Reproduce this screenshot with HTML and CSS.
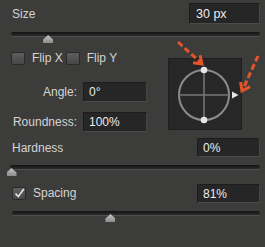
FILE: index.html
```html
<!DOCTYPE html>
<html>
<head>
<meta charset="utf-8">
<link rel="stylesheet" href="styles.css">
</head>
<body>
<div class="panel">
  <div class="row size-row">
    <span class="label">Size</span>
    <div class="field field-size">30 px</div>
  </div>
  <div class="slider slider-size"><div class="track"></div><div class="thumb" style="left:14.9%"></div></div>

  <div class="mid">
    <div class="mid-left">
      <div class="flips">
        <label class="cb"><span class="box"></span><span class="cb-text">Flip X</span></label>
        <label class="cb"><span class="box"></span><span class="cb-text">Flip Y</span></label>
      </div>
      <div class="prop prop-angle">
        <span class="plabel">Angle:</span>
        <div class="field field-prop">0°</div>
      </div>
      <div class="prop prop-round">
        <span class="plabel">Roundness:</span>
        <div class="field field-prop">100%</div>
      </div>
    </div>
    <div class="dial">
      <svg width="74" height="72" viewBox="0 0 74 72">
        <circle cx="36" cy="37" r="25" fill="none" stroke="#8c8c8c" stroke-width="2"/>
        <line x1="11" y1="37" x2="61" y2="37" stroke="#777" stroke-width="1.5"/>
        <line x1="36" y1="12" x2="36" y2="62" stroke="#777" stroke-width="1.5"/>
        <circle cx="36" cy="12" r="3.3" fill="#e6e6e6"/>
        <circle cx="36" cy="62" r="3.3" fill="#e6e6e6"/>
        <polygon points="64,33.5 70.5,37 64,40.5" fill="#e6e6e6"/>
      </svg>
    </div>
  </div>

  <div class="row hard-row">
    <span class="label">Hardness</span>
    <div class="field field-small">0%</div>
  </div>
  <div class="slider slider-hard"><div class="track"></div><div class="thumb" style="left:0.6%"></div></div>

  <div class="row spacing-row">
    <label class="cb"><span class="box checked"><svg width="11" height="11" viewBox="0 0 11 11"><polyline points="1.5,5.5 4.3,8.6 9.8,1" fill="none" stroke="#e8e8e8" stroke-width="1.6"/></svg></span><span class="cb-text">Spacing</span></label>
    <div class="field field-small">81%</div>
  </div>
  <div class="slider slider-spacing"><div class="track"></div><div class="thumb" style="left:39.7%"></div></div>

  <svg class="arrows" width="265" height="247" viewBox="0 0 265 247">
    <g fill="none" stroke="#e5552b" stroke-width="3">
      <line x1="178" y1="42" x2="200" y2="62" stroke-dasharray="6 3"/>
      <polyline points="193,62.8 202,64 200.1,55.2" stroke-linejoin="miter"/>
      <line x1="258" y1="56" x2="243.5" y2="88" stroke-dasharray="6 3"/>
      <polyline points="240.6,82 242,91 250,86.6" stroke-linejoin="miter"/>
    </g>
  </svg>
</div>
</body>
</html>
```

FILE: styles.css
```css
html, body {
  margin: 0;
  padding: 0;
  background: #3c3c3b;
}
.panel {
  position: relative;
  width: 265px;
  height: 247px;
  box-sizing: border-box;
  padding: 3px 5px 0 11px;
  background: #3c3c3b;
  font-family: "Liberation Sans", Arial, sans-serif;
  font-size: 12px;
  color: #d4d4d4;
  overflow: hidden;
}
.row {
  display: flex;
  align-items: center;
  justify-content: space-between;
}
.label {
  padding-left: 1px;
}
.size-row { height: 21px; }
.field {
  box-sizing: border-box;
  background: #262626;
  border: 1px solid #1d1d1d;
  border-bottom-color: #4a4a4a;
  border-right-color: #444;
  color: #ececec;
  display: flex;
  align-items: center;
  padding-left: 5px;
}
.field-size { width: 71px; height: 21px; padding-left: 6px; font-size: 12.5px; }
.field-small { width: 63px; height: 19px; }
.field-prop { width: 64px; height: 20px; }

.slider {
  position: relative;
  height: 4px;
}
.track {
  height: 4px;
  border-radius: 2px;
  background: linear-gradient(#121212, #2c2c2c);
  box-shadow: 0 1px 0 rgba(255,255,255,0.1);
}
.thumb {
  position: absolute;
  top: 3px;
  width: 10px;
  height: 8px;
  transform: translateX(-50%);
  background: linear-gradient(#c4c4c4, #8c8c8c);
  clip-path: polygon(50% 0, 100% 55%, 100% 100%, 0 100%, 0 55%);
}
.slider-size { margin-top: 8px; }
.slider-hard { margin-top: 8px; margin-left: -1px; }
.slider-spacing { margin-top: 8px; margin-left: 1px; }

.mid {
  display: flex;
  align-items: flex-start;
  margin-top: 16px;
}
.mid-left {
  width: 136px;
}
.flips {
  display: flex;
  height: 13px;
  align-items: center;
  gap: 3px;
}
.cb {
  display: flex;
  align-items: center;
  gap: 7px;
}
.box {
  box-sizing: border-box;
  width: 14px;
  height: 13px;
  border: 1px solid #2a2a2a;
  border-radius: 2px;
  background: linear-gradient(#5e5e5e, #474747);
  display: flex;
  align-items: center;
  justify-content: center;
}
.cb-text { line-height: 13px; }
.prop {
  display: flex;
  align-items: center;
  gap: 6px;
}
.plabel {
  width: 66px;
  text-align: right;
}
.prop-angle { margin-top: 17px; }
.prop-round { margin-top: 10px; }

.dial {
  margin-top: 6px;
  margin-left: 21px;
  width: 74px;
  height: 72px;
  background: #272727;
  box-shadow: inset 0 0 0 1px #1f1f1f;
}
.dial svg { display: block; }

.hard-row { height: 19px; margin-top: 6px; }
.spacing-row { height: 19px; margin-top: 15px; padding-left: 1px; }

.arrows {
  position: absolute;
  left: 0;
  top: 0;
  pointer-events: none;
}
```
